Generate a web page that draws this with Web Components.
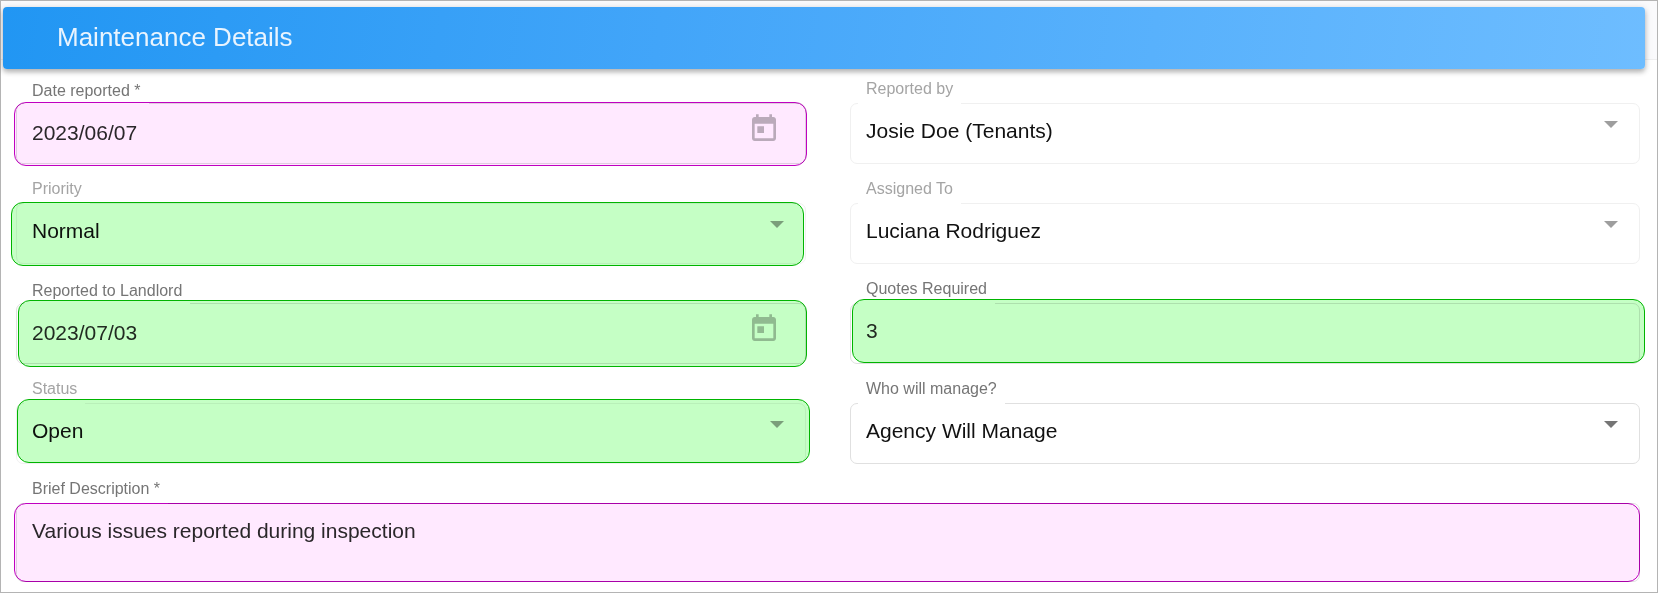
<!DOCTYPE html>
<html lang="en">
<head>
<meta charset="utf-8">
<title>Maintenance Details</title>
<style>
  body { margin: 0; font-family: "Liberation Sans", Arial, sans-serif; background: #fff; }
</style>
</head>
<body>
<maintenance-page></maintenance-page>

<script>
const fieldStyles = `
  :host { display: block; position: relative; min-width: 0; --ink: #111; --label: #757575; --outline: #e0e0e0; --caret: #757575; }
  :host([disabled]) { --label: #a4a4a4; --outline: #f0f0f0; --caret: #9e9e9e; }
  .field { display: flex; flex-direction: column; align-items: flex-start; }
  label {
    position: relative; z-index: 1; margin: 0 0 -1px 8px; padding: 0 8px 5px;
    background: #fff; color: var(--label); font-size: 16px; line-height: 20px; white-space: nowrap;
  }
  .box {
    position: relative; display: flex; width: 100%; height: 61px; box-sizing: border-box;
    border: 1px solid var(--outline); border-radius: 7px;
  }
  input, select, textarea {
    flex: 1; min-width: 0; margin: 0; padding: 15px 15px 0; border: 0; outline: 0; background: none;
    appearance: none; resize: none; overflow: hidden; opacity: 1; border-radius: 0;
    color: var(--ink); font: 21px/24px "Liberation Sans", Arial, sans-serif;
  }
  input, select { padding-bottom: 20px; }
  ::slotted(highlight-mark) { z-index: 2; }
`;
let serial = 0;

class BaseField extends HTMLElement {
  connectedCallback() {
    const id = 'control-' + (++serial);
    const root = this.attachShadow({ mode: 'open' });
    root.innerHTML = `<style>${fieldStyles}${this.extraStyles()}</style>
      <div class="field">
        <label for="${id}">${this.getAttribute('label')}</label>
        <div class="box">${this.control(id, this.getAttribute('value'))}<slot></slot></div>
      </div>`;
  }
  extraStyles() { return ''; }
}

class TextField extends BaseField {
  extraStyles() { return `:host { --ink: #2a2a2a; }`; }
  control(id, value) { return `<input id="${id}" type="text" value="${value}">`; }
}

class DateField extends BaseField {
  extraStyles() {
    return `
      :host { --ink: #2a2a2a; }
      label { padding-top: 2px; padding-bottom: 3px; }
      input { padding-top: 17px; padding-bottom: 18px; }
      button { flex: none; width: 32px; height: 32px; margin: 9px 25px 0 0; padding: 0; border: 0; background: none; color: #bababa; }
      svg { display: block; width: 32px; height: 32px; fill: currentColor; }`;
  }
  control(id, value) {
    return `<input id="${id}" type="text" value="${value}">
      <button type="button" aria-label="Open calendar"><svg viewBox="0 0 24 24" aria-hidden="true"><path d="M19 3h-1V1h-2v2H8V1H6v2H5c-1.11 0-1.99.9-1.99 2L3 19c0 1.1.89 2 2 2h14c1.1 0 2-.9 2-2V5c0-1.1-.9-2-2-2zm0 16H5V8h14v11zM7 10h5v5H7z"/></svg></button>`;
  }
}

class SelectField extends BaseField {
  extraStyles() {
    return `
      svg { flex: none; width: 14px; height: 7px; margin: 17px 21px 0 0; fill: var(--caret); pointer-events: none; }`;
  }
  control(id, value) {
    const off = this.hasAttribute('disabled') ? 'disabled' : '';
    return `<select id="${id}" ${off}><option selected>${value}</option></select>
      <svg viewBox="0 0 14 7" aria-hidden="true"><path d="M0 0h14L7 7z"/></svg>`;
  }
}

class AreaField extends BaseField {
  extraStyles() { return `:host { --ink: #2a2a2a; } .box { height: 79px; }`; }
  control(id, value) { return `<textarea id="${id}" rows="2">${value}</textarea>`; }
}

/* Translucent marker laid over a field; --over sets how far it reaches past each edge. */
class HighlightMark extends HTMLElement {
  connectedCallback() {
    this.attachShadow({ mode: 'open' }).innerHTML = `<style>
      :host {
        position: absolute; inset: var(--over, -2px); box-sizing: border-box; pointer-events: none;
        border: 1px solid #00b400; border-radius: 12px; background: #c5ffc5; mix-blend-mode: multiply;
      }
      :host([tone="required"]) { border-color: #c000c0; background: #ffe9ff; }
    </style>`;
  }
}

class SectionHeader extends HTMLElement {
  connectedCallback() {
    this.attachShadow({ mode: 'open' }).innerHTML = `<style>
      :host { display: block; padding: 6px 12px 0 2px; background: linear-gradient(#fafafc 58px, #efeff0 58px, #efeff0 59px, #fff 59px); }
      header {
        display: flex; align-items: center; height: 62px; box-sizing: border-box; padding: 0 54px 2px;
        border-radius: 4px; background: linear-gradient(98deg, #2196f3, #42a5f9 40%, #6ebdff);
        box-shadow: 0 3px 5px rgba(0,0,0,.26), 0 1px 8px rgba(0,0,0,.1);
      }
      h1 { margin: 0; color: #e9f4fe; font-size: 26px; line-height: 32px; font-weight: 400; }
    </style><header><h1><slot></slot></h1></header>`;
  }
}

class MaintenancePage extends HTMLElement {
  connectedCallback() {
    this.attachShadow({ mode: 'open' }).innerHTML = `<style>
      :host { display: block; min-height: 100vh; box-sizing: border-box; border: 1px solid #b4b4b4; }
      form { display: grid; grid-template-columns: minmax(0, 1fr) minmax(0, 1fr); gap: 15px 44px; padding: 10px 17px 8px 15px; }
      area-field { grid-column: 1 / -1; }
    </style>
    <section-header>Maintenance Details</section-header>
    <form>
      <date-field label="Date reported *" value="2023/06/07"><highlight-mark tone="required" style="--over: -2px -2px -3px -3px"></highlight-mark></date-field>
      <select-field label="Reported by" value="Josie Doe (Tenants)" disabled></select-field>
      <select-field label="Priority" value="Normal" disabled><highlight-mark style="--over: -2px 1px -3px -6px"></highlight-mark></select-field>
      <select-field label="Assigned To" value="Luciana Rodriguez" disabled></select-field>
      <date-field label="Reported to Landlord" value="2023/07/03"><highlight-mark style="--over: -4px -2px -4px 1px"></highlight-mark></date-field>
      <text-field label="Quotes Required" value="3"><highlight-mark style="--over: -5px -6px 0 1px"></highlight-mark></text-field>
      <select-field label="Status" value="Open" disabled><highlight-mark style="--over: -5px -5px 0 0"></highlight-mark></select-field>
      <select-field label="Who will manage?" value="Agency Will Manage"></select-field>
      <area-field label="Brief Description *" value="Various issues reported during inspection"><highlight-mark tone="required" style="--over: -1px -1px -1px -3px"></highlight-mark></area-field>
    </form>`;
  }
}

customElements.define('highlight-mark', HighlightMark);
customElements.define('text-field', TextField);
customElements.define('date-field', DateField);
customElements.define('select-field', SelectField);
customElements.define('area-field', AreaField);
customElements.define('section-header', SectionHeader);
customElements.define('maintenance-page', MaintenancePage);
</script>
</body>
</html>
